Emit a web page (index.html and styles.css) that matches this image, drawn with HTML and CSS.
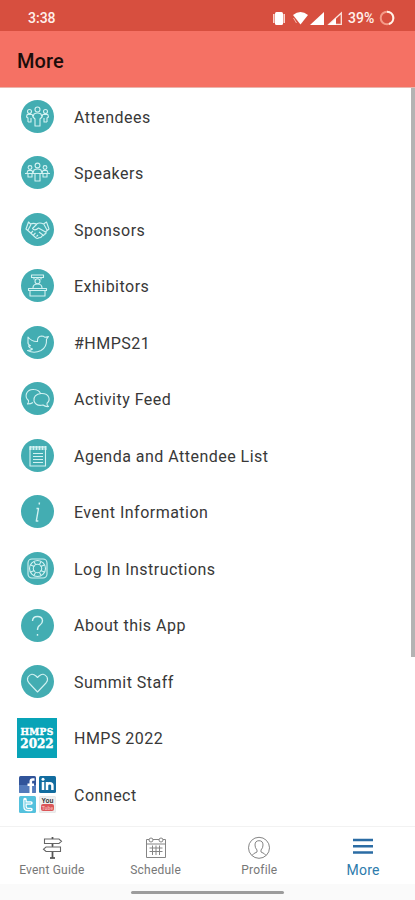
FILE: index.html
```html
<!DOCTYPE html>
<html lang="en">
<head>
<meta charset="utf-8">
<title>More</title>
<link rel="stylesheet" href="styles.css">
</head>
<body>
<div class="app">
  <div class="status">
    <span class="time">3:38</span>
    <svg class="signals" width="70" height="16" viewBox="0 0 70 16" fill="#fff">
      <rect x="3" y="2" width="8" height="13" rx="1.5"/><path d="M1.800 4v9M12.200 4v9" stroke="#fbdcd5" stroke-width="1.5"/>
      <path d="M21 5Q28.500 -1 36 5L28.500 14.500Z"/><path d="M21.500 8l3 5" stroke="#f6b5aa"/>
      <path d="M38 15L52 2V15Z"/>
      <path d="M57 14.300L69.300 3V14.300Z" fill="none" stroke="#fbe5df" stroke-width="1.300"/><path d="M56.500 15L64 8V15Z"/>
    </svg>
    <span class="battery">39%</span>
    <svg class="ring" width="16" height="16" viewBox="0 0 16 16" fill="none" stroke-width="2"><circle cx="8" cy="8" r="6.300" stroke="#f49b88"/><path d="M8 1.700A6.300 6.300 0 0 1 10 14" stroke="#fff4ea"/></svg>
  </div>
  <header class="header"><h1>More</h1></header>
  <main class="list">
    <div class="row"><span class="slot"><svg class="disc" viewBox="0 0 33 33"><circle class="bg" cx="16.500" cy="16.500" r="16.500"/><circle cx="16.500" cy="9.500" r="2.500"/><circle cx="8.500" cy="11.500" r="2"/><circle cx="24.500" cy="11.500" r="2"/><path d="M14 26v-7l-2-2 1-3q3.500-2 7 0l1 3-2 2v7zM7 22v-4l-1.500-1 .7-2.500h5l1 3M10 18v4H7M26 22v-4l1.500-1-.7-2.500h-5l-1 3M23 18v4h3"/></svg></span><span class="label">Attendees</span></div>
    <div class="row"><span class="slot"><svg class="disc" viewBox="0 0 33 33"><circle class="bg" cx="16.500" cy="16.500" r="16.500"/><circle cx="16.500" cy="9.500" r="2.400"/><circle cx="9" cy="11.500" r="1.900"/><circle cx="24" cy="11.500" r="1.900"/><path d="M4 17.500h25M6 17l1-2.500h4l1 3M12 17l1-3q3.500-2 7 0l1 3M21 17l1-2.500h4l1 2.500M14 18v7h5v-7M7 18v3h4v-3M22 18v3h4v-3"/></svg></span><span class="label">Speakers</span></div>
    <div class="row"><span class="slot"><svg class="disc" viewBox="0 0 33 33"><circle class="bg" cx="16.500" cy="16.500" r="16.500"/><path d="M7.500 9L5 16l3 2.500 6.500 6q2 2 3.500 0 2 .8 3-1.500 2 0 2.500-2 2 0 1.500-2.500l3-2.500-2.500-7-3 2q-4-2-7 0-3-1.200-6 0zM16 11l-4.500 4.500q2 3 6-.5l7 4M7 17l3-5.500M26 17l-3-5.500M12 18l-2 2M14.500 20l-2 2M17 22l-1.500 1.500M18 19l4 3"/></svg></span><span class="label">Sponsors</span></div>
    <div class="row"><span class="slot"><svg class="disc" viewBox="0 0 33 33"><circle class="bg" cx="16.500" cy="16.500" r="16.500"/><path d="M10.500 6h12v2.500h-12zM13 8.500v2M20 8.500v2M7.500 19.500h18v2h-18zM9 21.500V27h15v-5.500M12 19q0-4 4.500-4t4.500 4"/><circle cx="16.500" cy="12.300" r="2.500"/></svg></span><span class="label">Exhibitors</span></div>
    <div class="row"><span class="slot"><svg class="disc" viewBox="0 0 33 33"><circle class="bg" cx="16.500" cy="16.500" r="16.500"/><path d="M7 11q4 5 9.500 4.500-.5-5 4-5.500 2 0 3.500 1.300l3.500-.8-2 2.800q.5 8-5.500 11.200-7 3.500-13.500 0 3.500 0 5-1.500-3-.5-4-3l2-.2q-3-1.500-2.500-4z"/></svg></span><span class="label">#HMPS21</span></div>
    <div class="row"><span class="slot"><svg class="disc" viewBox="0 0 33 33"><circle class="bg" cx="16.500" cy="16.500" r="16.500"/><path d="M12 20.500q-2 1.500-5.500 1.500 1.500-1.500 1-3.500-3.500-3-2-7 2-4.500 7.500-4 5 .3 6.500 4M20 11.500c9-.5 9.500 7 6 9.800q-.5 2 1.500 3.200-3 .5-5.500-1.500-7 1.500-9-4c-.8-4 2-7.200 7-7.500z"/></svg></span><span class="label">Activity Feed</span></div>
    <div class="row"><span class="slot"><svg class="disc" viewBox="0 0 33 33"><circle class="bg" cx="16.500" cy="16.500" r="16.500"/><path d="M9 8h15.500v19H9zM12 14.500h10M12 17.500h10M12 20.500h10M12 23.500h10"/><path d="M8.500 9h17" stroke-width="4" stroke-dasharray="2 1"/></svg></span><span class="label">Agenda and Attendee List</span></div>
    <div class="row"><span class="slot"><svg class="disc" viewBox="0 0 33 33"><circle class="bg" cx="16.500" cy="16.500" r="16.500"/><path d="M18.500 7.500l-.4 2M15.500 13.500h2L15.300 26h2" stroke-width="1.400"/></svg></span><span class="label">Event Information</span></div>
    <div class="row"><span class="slot"><svg class="disc" viewBox="0 0 33 33"><circle class="bg" cx="16.500" cy="16.500" r="16.500"/><rect x="7" y="7" width="19" height="19" rx="4"/><circle cx="16.500" cy="16.500" r="8"/><circle cx="16.500" cy="16.500" r="4.200"/><path d="M9.500 13l4 1.500M13 9.500l1.500 3M23.500 13l-4 1.500M20 9.500l-1.500 3M9.500 20l4-1.500M13 23.500l1.500-3M23.500 20l-4-1.500M20 23.500l-1.500-3"/></svg></span><span class="label">Log In Instructions</span></div>
    <div class="row"><span class="slot"><svg class="disc" viewBox="0 0 33 33"><circle class="bg" cx="16.500" cy="16.500" r="16.500"/><path d="M11.500 12q.2-4.500 5-4.500t5 4.200q0 2.500-2.500 4.300-2.500 1.500-2.500 5M16.500 25v1.700" stroke-width="1.400"/></svg></span><span class="label">About this App</span></div>
    <div class="row"><span class="slot"><svg class="disc" viewBox="0 0 33 33"><circle class="bg" cx="16.500" cy="16.500" r="16.500"/><path d="M16.500 27L8 18Q5.500 15 7 12q3.500-5 8-1l1.500 1.500L18 11q4.500-4 8 1 1.500 3-1 6z"/></svg></span><span class="label">Summit Staff</span></div>
    <div class="row"><span class="slot"><span class="tile"><span class="t1">HMPS</span><span class="t2">2022</span></span></span><span class="label">HMPS 2022</span></div>
    <div class="row"><span class="slot"><span class="social">
      <svg viewBox="0 0 17 17"><rect width="17" height="17" rx="1.500" fill="#31549a"/><path d="M0 9h17v6.500a1.500 1.500 0 0 1-1.500 1.500h-14A1.500 1.500 0 0 1 0 15.500z" fill="#537abb"/><path d="M15.500 3.500h-1.700q-2 0-2 2V17M8.500 8.800h6.500" stroke="#fff" stroke-width="2.600" fill="none"/></svg>
      <svg viewBox="0 0 17 17"><rect width="17" height="17" rx="1.500" fill="#126c9f"/><path d="M4 6v8M8 14V6M8 9.500q0-2.300 2.700-2.300t2.700 2.300V14" stroke="#fff" stroke-width="2.500" fill="none"/><circle cx="4" cy="3.300" r="1.500" fill="#fff"/></svg>
      <svg viewBox="0 0 17 17"><rect width="17" height="17" rx="1.500" fill="#54c1dd"/><path d="M6 3.500v7q0 3 3 3h3M6 7h6" stroke="#fff" stroke-width="3.500" stroke-linecap="round" fill="none"/><path d="M6 4v6.500q0 3 3 3h3M6 7h6" stroke="#7bd2e7" stroke-width="1.200" fill="none"/></svg>
      <svg viewBox="0 0 17 17"><rect x=".3" y=".3" width="16.400" height="16.400" rx="1.500" fill="#eee" stroke="#ddd" stroke-width=".6"/><rect x="2" y="8" width="13" height="7" rx="2" fill="#db5658"/><text x="8.500" y="7" class="you">You</text><text x="8.500" y="13.500" class="tube">Tube</text></svg>
    </span></span><span class="label">Connect</span></div>
    <span class="scroll"></span>
  </main>
  <nav class="tabs">
    <div class="tab"><svg width="24" height="24" viewBox="0 0 24 24"><path d="M12.500 1v2M4.500 3H19l2.500 2.300L19 7.500H4.500zM12.500 7.500V11M20.500 11H6l-2.500 2.200L6 15.500h14.500zM12.500 15.500V22M10 22h5" stroke="#666" stroke-width="1.100"/><path d="M12.500 1v2M12.500 8v2.500M12.500 16v6M10 22h5" stroke="#555" stroke-width="1.700"/></svg><span>Event Guide</span></div>
    <div class="tab"><svg width="24" height="24" viewBox="0 0 24 24"><path d="M5 3.500H2.500v18h19v-18H19M9 3.500h6M2.500 8h19M5.500 12h13M5.500 15.500h13M8.500 9.500v9.500M12 9.500v9.500M15.500 9.500v9.500"/><circle cx="7" cy="4" r="2"/><circle cx="17" cy="4" r="2"/></svg><span>Schedule</span></div>
    <div class="tab"><svg width="24" height="24" viewBox="0 0 24 24"><circle cx="12" cy="11.800" r="10.500"/><path d="M5 19.500q1-2 5-3.500v-2q-2-2-2-5 0-4.300 4-4.300t4 4.300q0 3-2 5v2q4 1.500 5 3.500"/></svg><span>Profile</span></div>
    <div class="tab active"><svg width="24" height="24" viewBox="0 0 24 24"><path d="M2 4h20M2 10.200h20M2 16.400h20" stroke="#2b6ca4" stroke-width="2.500"/></svg><span>More</span></div>
  </nav>
  <footer class="gesture"><span class="handle"></span></footer>
</div>
</body>
</html>
```
FILE: styles.css
```css
* { box-sizing: border-box; }
body { margin: 0; font-family: Roboto, "Liberation Sans", sans-serif; background: #fff; }
.app { width: 415px; height: 900px; display: flex; flex-direction: column; overflow: hidden; }
.status { height: 31px; flex: none; background: #d74f3f; display: flex; align-items: center; padding: 5px 20px 0 28px; color: #fff0ec; }
.time { font-size: 14px; font-weight: 500; flex: 1; }
.signals { margin-right: 6px; }
.battery { font-size: 14px; font-weight: 500; width: 30px; }
.ring { margin-left: 1px; }
.header { height: 57px; flex: none; background: #f57164; border-bottom: 1px solid #eab5ad; display: flex; align-items: center; padding: 3px 17px 0; }
h1 { margin: 0; font-size: 20px; font-weight: 500; color: #1d0d0b; letter-spacing: 0.1px; }
.list { height: 738px; flex: none; position: relative; }
.row { height: 56.540px; display: flex; align-items: center; }
.slot { width: 74px; display: flex; justify-content: center; }
.disc { width: 33px; height: 33px; display: block; fill: none; stroke: #d3f2f2; stroke-width: 1.100; stroke-linejoin: round; }
.bg { fill: #43adb2; stroke: none; }
.label { font-size: 16px; letter-spacing: 0.48px; color: #383838; white-space: nowrap; padding-top: 1.500px; }
.tile { width: 40px; height: 40px; background: #08a3b7; color: #fff; display: flex; flex-direction: column; align-items: center; justify-content: center; font-family: "DejaVu Serif", serif; font-weight: 700; -webkit-text-stroke: 0.4px #fff; }
.t1 { font-size: 9px; line-height: 11px; letter-spacing: 0.3px; }
.t2 { font-size: 12px; line-height: 12px; }
.social { display: grid; grid-template-columns: 17px 17px; gap: 3px; }
.social svg { width: 17px; height: 17px; display: block; }
.you, .tube { font-family: "Liberation Sans", sans-serif; font-weight: 700; text-anchor: middle; }
.you { font-size: 6.500px; fill: #333; }
.tube { font-size: 5px; fill: #f3b0b0; }
.scroll { position: absolute; right: 0; top: 0; width: 4px; height: 569px; background: #b3b3b3; }
.tabs { height: 58px; flex: none; border-top: 1px solid #f2f2f2; display: grid; grid-template-columns: repeat(4, 1fr); }
.tab { display: flex; flex-direction: column; align-items: center; padding-top: 9px; font-size: 12px; line-height: 14px; letter-spacing: 0.2px; color: #777; gap: 3px; }
.tab svg { fill: none; stroke: #858585; stroke-width: 1; display: block; }
.tab.active { font-size: 14px; color: #2d7bac; }
.gesture { flex: 1; background: #fafafa; display: flex; justify-content: center; align-items: center; }
.handle { width: 153px; height: 3px; border-radius: 2px; background: #9c9c9c; }
```
